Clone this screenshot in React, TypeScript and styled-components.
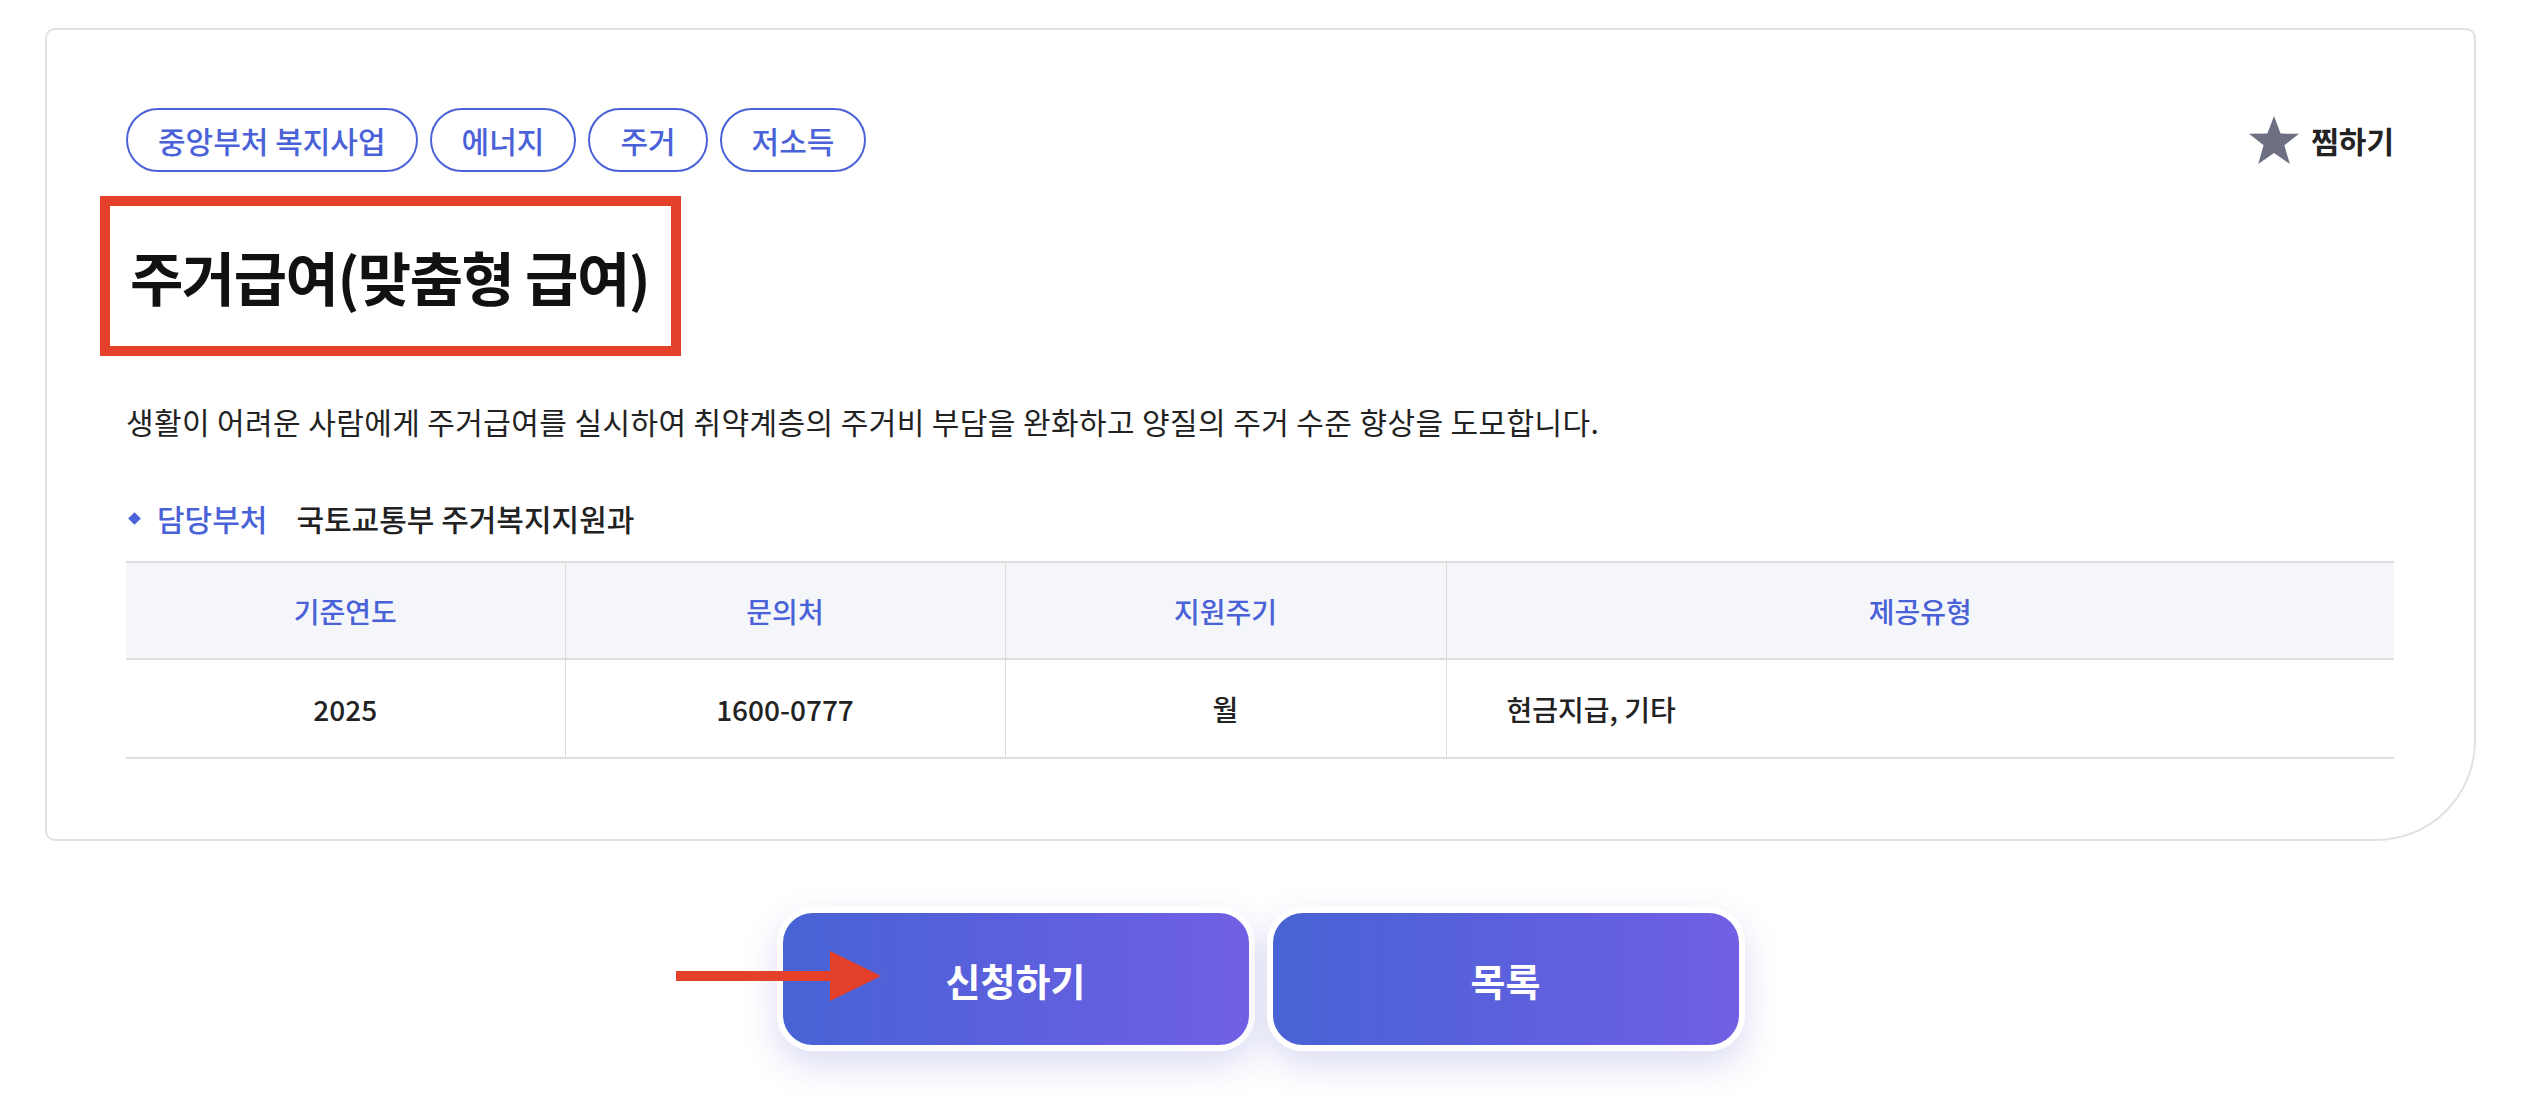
import React from 'react'
import styled, { createGlobalStyle } from 'styled-components'

const GlobalStyle = createGlobalStyle`
  * { box-sizing: border-box; }
  body {
    margin: 0;
    background: #ffffff;
    font-family: "Noto Sans CJK KR", "Noto Sans", sans-serif;
    color: #222222;
  }
`

const Page = styled.div`
  width: 2538px;
  padding: 28px 62px 60px 45px;
`

const Card = styled.section`
  border: 2px solid #e2e2e2;
  border-radius: 10px 10px 100px 10px;
  padding: 78px 80px 80px 79px;
  background: #ffffff;
`

const TopRow = styled.div`
  display: flex;
  justify-content: space-between;
  align-items: center;
`

const TagList = styled.div`
  display: flex;
  gap: 12px;
`

const Tag = styled.span`
  display: inline-flex;
  align-items: center;
  height: 64px;
  padding: 0 30px;
  border: 2px solid #4a62d8;
  border-radius: 32px;
  color: #4a62d8;
  font-size: 30px;
  font-weight: 500;
  white-space: nowrap;
`

const FavButton = styled.button`
  display: flex;
  align-items: center;
  gap: 11px;
  padding: 0;
  border: none;
  background: none;
  font-family: inherit;
  font-size: 30px;
  font-weight: 700;
  color: #222222;
  cursor: pointer;
`

const TitleMark = styled.div`
  display: inline-flex;
  align-items: center;
  height: 160px;
  margin: 24px 0 0 -26px;
  padding: 0 22px 0 20px;
  border: 10px solid #e5402a;
`

const Title = styled.h2`
  margin: 0;
  font-size: 58px;
  font-weight: 700;
  letter-spacing: -1.5px;
  color: #111111;
  line-height: 1;
`

const Description = styled.p`
  margin: 44px 0 0;
  font-size: 30px;
  line-height: 42px;
  letter-spacing: 0.4px;
  color: #222222;
`

const DeptRow = styled.div`
  display: flex;
  align-items: center;
  margin-top: 55px;
  height: 42px;
`

const Diamond = styled.span`
  width: 9px;
  height: 9px;
  margin: 0 18px 0 4px;
  background: #4a62d8;
  transform: rotate(45deg);
`

const DeptLabel = styled.span`
  font-size: 30px;
  font-weight: 500;
  color: #4a62d8;
`

const DeptValue = styled.span`
  margin-left: 29px;
  font-size: 30px;
  font-weight: 500;
  color: #222222;
`

const Table = styled.table`
  width: 100%;
  margin-top: 22px;
  border-collapse: collapse;
  table-layout: fixed;
  border-top: 2px solid #dedede;
`

const HeadCell = styled.th`
  height: 97px;
  background: #f5f6fa;
  border-bottom: 2px solid #dedede;
  border-left: 1px solid #dcdcdc;
  color: #4a62d8;
  font-size: 28px;
  font-weight: 500;
  &:first-child { border-left: none; }
`

const BodyCell = styled.td<{ $align?: 'left' | 'center' }>`
  height: 99px;
  border-bottom: 2px solid #dedede;
  border-left: 1px solid #dcdcdc;
  text-align: ${p => p.$align || 'center'};
  padding: ${p => (p.$align === 'left' ? '0 0 0 60px' : '0')};
  font-size: 28px;
  font-weight: 500;
  color: #222222;
  &:first-child { border-left: none; }
`

const ButtonRow = styled.div`
  position: relative;
  display: flex;
  justify-content: center;
  gap: 12px;
  margin-top: 66px;
`

const ActionButton = styled.button`
  width: 478px;
  height: 144px;
  border: 6px solid #ffffff;
  border-radius: 36px;
  background: linear-gradient(90deg, #4763d4 0%, #5b60dc 50%, #7160e4 100%);
  box-shadow: 0 14px 34px rgba(92, 96, 200, 0.22);
  color: #ffffff;
  font-family: inherit;
  font-size: 38px;
  font-weight: 700;
  cursor: pointer;
`

const ArrowMark = styled.svg`
  position: absolute;
  left: 631px;
  top: 44px;
  z-index: 2;
`

const columns = ['기준연도', '문의처', '지원주기', '제공유형']
const tags = ['중앙부처 복지사업', '에너지', '주거', '저소득']

const StarIcon = () => (
  <svg width="52" height="50" viewBox="0 0 52 50">
    <polygon
      points="26,1 32.6,18.6 51,18.8 36.4,30.2 41.8,49 26,38 10.2,49 15.6,30.2 1,18.8 19.4,18.6"
      fill="#6d6f82"
    />
  </svg>
)

export default function App() {
  return (
    <Page>
      <GlobalStyle />
      <Card>
        <TopRow>
          <TagList>
            {tags.map(t => (
              <Tag key={t}>{t}</Tag>
            ))}
          </TagList>
          <FavButton>
            <StarIcon />
            찜하기
          </FavButton>
        </TopRow>
        <TitleMark>
          <Title>주거급여(맞춤형 급여)</Title>
        </TitleMark>
        <Description>
          생활이 어려운 사람에게 주거급여를 실시하여 취약계층의 주거비 부담을 완화하고 양질의 주거 수준 향상을 도모합니다.
        </Description>
        <DeptRow>
          <Diamond />
          <DeptLabel>담당부처</DeptLabel>
          <DeptValue>국토교통부 주거복지지원과</DeptValue>
        </DeptRow>
        <Table>
          <colgroup>
            <col style={{ width: 439 }} />
            <col style={{ width: 440 }} />
            <col style={{ width: 441 }} />
            <col />
          </colgroup>
          <thead>
            <tr>
              {columns.map(c => (
                <HeadCell key={c}>{c}</HeadCell>
              ))}
            </tr>
          </thead>
          <tbody>
            <tr>
              <BodyCell>2025</BodyCell>
              <BodyCell>1600-0777</BodyCell>
              <BodyCell>월</BodyCell>
              <BodyCell $align="left">현금지급, 기타</BodyCell>
            </tr>
          </tbody>
        </Table>
      </Card>
      <ButtonRow>
        <ArrowMark width="205" height="50" viewBox="0 0 205 50">
          <rect x="0" y="20" width="156" height="10" fill="#e5402a" />
          <polygon points="154,0 205,25 154,50" fill="#e5402a" />
        </ArrowMark>
        <ActionButton>신청하기</ActionButton>
        <ActionButton>목록</ActionButton>
      </ButtonRow>
    </Page>
  )
}
